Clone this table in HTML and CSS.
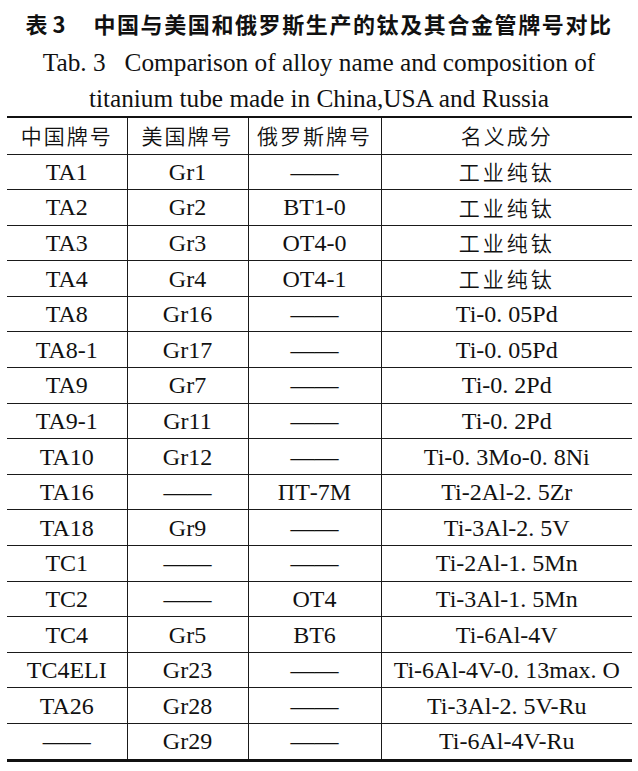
FILE: index.html
```html
<!DOCTYPE html>
<html lang="zh">
<head>
<meta charset="utf-8">
<title>表3 中国与美国和俄罗斯生产的钛及其合金管牌号对比</title>
<link rel="stylesheet" href="styles.css">
</head>
<body>
<div class="page">
  <h1 class="title-cn"><span class="tab-no">表 3</span><span class="title-text">中国与美国和俄罗斯生产的钛及其合金管牌号对比</span></h1>
  <p class="title-en first">Tab. 3&nbsp;&nbsp; Comparison of alloy name and composition of</p>
  <p class="title-en">titanium tube made in China,USA and Russia</p>
  <table class="grades">
    <colgroup>
      <col class="c1"><col class="c2"><col class="c3"><col class="c4">
    </colgroup>
    <thead>
      <tr><th>中国牌号</th><th>美国牌号</th><th>俄罗斯牌号</th><th>名义成分</th></tr>
    </thead>
    <tbody>
      <tr><td>TA1</td><td>Gr1</td><td class="dash">——</td><td class="cn">工业纯钛</td></tr>
      <tr><td>TA2</td><td>Gr2</td><td>BT1-0</td><td class="cn">工业纯钛</td></tr>
      <tr><td>TA3</td><td>Gr3</td><td>OT4-0</td><td class="cn">工业纯钛</td></tr>
      <tr><td>TA4</td><td>Gr4</td><td>OT4-1</td><td class="cn">工业纯钛</td></tr>
      <tr><td>TA8</td><td>Gr16</td><td class="dash">——</td><td>Ti-0. 05Pd</td></tr>
      <tr><td>TA8-1</td><td>Gr17</td><td class="dash">——</td><td>Ti-0. 05Pd</td></tr>
      <tr><td>TA9</td><td>Gr7</td><td class="dash">——</td><td>Ti-0. 2Pd</td></tr>
      <tr><td>TA9-1</td><td>Gr11</td><td class="dash">——</td><td>Ti-0. 2Pd</td></tr>
      <tr><td>TA10</td><td>Gr12</td><td class="dash">——</td><td>Ti-0. 3Mo-0. 8Ni</td></tr>
      <tr><td>TA16</td><td class="dash">——</td><td>ПТ-7M</td><td>Ti-2Al-2. 5Zr</td></tr>
      <tr><td>TA18</td><td>Gr9</td><td class="dash">——</td><td>Ti-3Al-2. 5V</td></tr>
      <tr><td>TC1</td><td class="dash">——</td><td class="dash">——</td><td>Ti-2Al-1. 5Mn</td></tr>
      <tr><td>TC2</td><td class="dash">——</td><td>OT4</td><td>Ti-3Al-1. 5Mn</td></tr>
      <tr><td>TC4</td><td>Gr5</td><td>BT6</td><td>Ti-6Al-4V</td></tr>
      <tr><td>TC4ELI</td><td>Gr23</td><td class="dash">——</td><td>Ti-6Al-4V-0. 13max. O</td></tr>
      <tr><td>TA26</td><td>Gr28</td><td class="dash">——</td><td>Ti-3Al-2. 5V-Ru</td></tr>
      <tr><td class="dash">——</td><td>Gr29</td><td class="dash">——</td><td>Ti-6Al-4V-Ru</td></tr>
    </tbody>
  </table>
</div>
</body>
</html>
```

FILE: styles.css
```css
html, body {
  margin: 0;
  padding: 0;
  background: #ffffff;
}

.page {
  width: 638px;
  color: #111111;
  font-family: "Liberation Serif", "Noto Sans CJK SC", serif;
}

.title-cn {
  margin: 0;
  padding-top: 7px;
  height: 32px;
  line-height: 32px;
  text-align: center;
  font-family: "Noto Sans CJK SC", sans-serif;
  font-weight: 700;
  font-size: 22px;
  white-space: nowrap;
}

.tab-no {
  margin-right: 28px;
}

.title-text {
  letter-spacing: 1.6px;
}

.title-en {
  margin: 0;
  height: 36px;
  line-height: 36px;
  text-align: center;
  font-family: "Liberation Serif", serif;
  font-size: 25.3px;
  white-space: nowrap;
}

.title-en.first {
  margin-top: 5px;
}

.grades {
  margin: 0 0 0 7px;
  width: 625px;
  border-collapse: collapse;
  table-layout: fixed;
  border-top: 2px solid #111111;
  border-bottom: 3px solid #111111;
}

.c1 { width: 120px; }
.c2 { width: 121px; }
.c3 { width: 133px; }
.c4 { width: 251px; }

.grades th,
.grades td {
  height: 34.6px;
  padding: 0;
  text-align: center;
  vertical-align: middle;
  border-top: 1px solid #1a1a1a;
  border-left: 1px solid #1a1a1a;
  white-space: nowrap;
  font-family: "Liberation Serif", serif;
  font-size: 24px;
  line-height: 1;
}

.grades th:first-child,
.grades td:first-child {
  border-left: none;
}

.grades thead th {
  height: 35.5px;
  font-family: "Noto Sans CJK SC", sans-serif;
  font-weight: 350;
  font-size: 21px;
  letter-spacing: 2px;
  border-top: none;
}

.grades td.cn {
  font-family: "Noto Sans CJK SC", sans-serif;
  font-weight: 350;
  font-size: 21px;
  letter-spacing: 3px;
}

.grades td.dash {
  font-family: "Liberation Serif", serif;
  font-size: 24px;
}
```
